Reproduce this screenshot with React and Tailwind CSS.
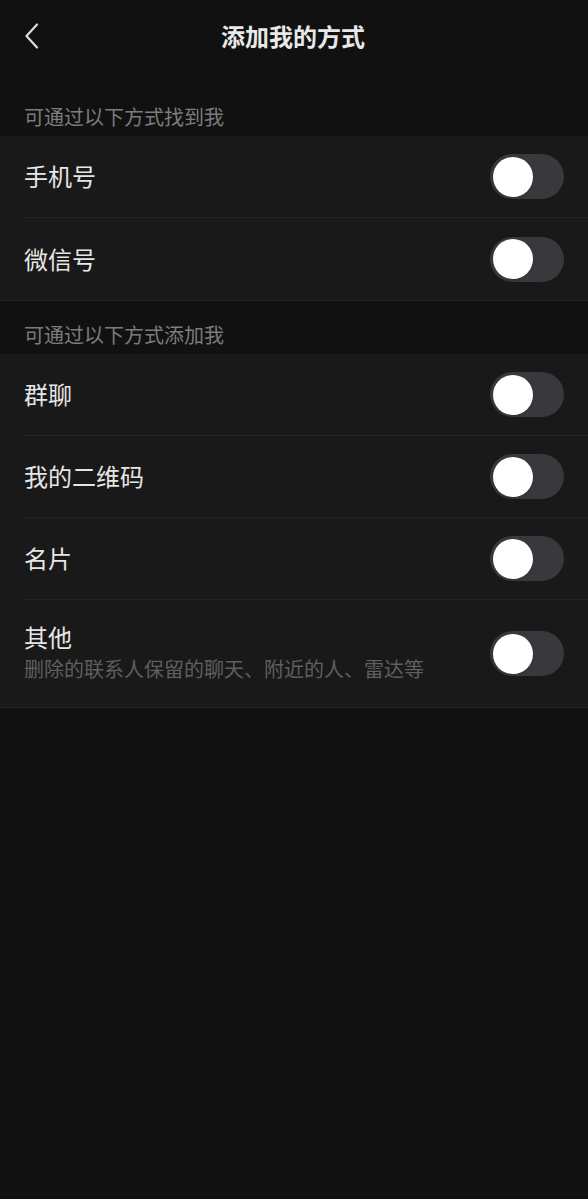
import { useState } from "react";

const font = { fontFamily: '"Noto Sans CJK SC", "Noto Sans", sans-serif' };

function Toggle({ on, onChange }) {
  return (
    <button
      onClick={() => onChange(!on)}
      className={`relative w-[74px] h-[45px] rounded-full shrink-0 ${on ? "bg-[#07c160]" : "bg-[#39393d]"}`}
    >
      <span
        className={`absolute top-[2.5px] w-[40px] h-[40px] rounded-full bg-white shadow ${on ? "left-[32px]" : "left-[2.5px]"}`}
      />
    </button>
  );
}

function Row({ label, desc, on, onChange, last }) {
  return (
    <div className="pl-6 bg-[#191919]">
      <div
        className={`flex items-center justify-between pr-6 ${desc ? "h-[107px]" : "h-[82px]"} ${last ? "" : "border-b border-[#242424]"}`}
      >
        <div className={`flex flex-col ${desc ? "-mt-[2px]" : "-mt-[1px]"}`}>
          <span className="text-[24px] leading-[30px] text-[#e6e6e6]">{label}</span>
          {desc && <span className="text-[20px] leading-[28px] text-[#5f5f5f] mt-[3px]">{desc}</span>}
        </div>
        <Toggle on={on} onChange={onChange} />
      </div>
    </div>
  );
}

const sections = [
  {
    title: "可通过以下方式找到我",
    items: [{ label: "手机号" }, { label: "微信号" }],
  },
  {
    title: "可通过以下方式添加我",
    items: [
      { label: "群聊" },
      { label: "我的二维码" },
      { label: "名片" },
      { label: "其他", desc: "删除的联系人保留的聊天、附近的人、雷达等" },
    ],
  },
];

export default function App() {
  const [state, setState] = useState({});

  return (
    <div className="min-h-[1199px] bg-[#111111]" style={font}>
      <div className="relative h-[75px] flex items-center justify-center">
        <button className="absolute left-[22px] top-[21px] p-[2px]">
          <svg width="16" height="26" viewBox="0 0 16 26" fill="none">
            <path d="M13 1.5 L2.5 13 L13 24.5" stroke="#dcdcdc" strokeWidth="2.2" strokeLinecap="round" strokeLinejoin="round" />
          </svg>
        </button>
        <h1 className="text-[24px] font-bold text-[#e8e8e8] -mt-[4px] -ml-[2px]">添加我的方式</h1>
      </div>

      {sections.map((sec, si) => (
        <div key={si}>
          <div className={`px-6 flex items-end pb-[4px] text-[20px] text-[#7c7c7c] ${si === 0 ? "h-[61px]" : "h-[53px]"}`}>
            {sec.title}
          </div>
          <div className="border-b border-[#222222]">
            {sec.items.map((it, i) => (
              <Row
                key={it.label}
                label={it.label}
                desc={it.desc}
                last={i === sec.items.length - 1}
                on={!!state[it.label]}
                onChange={(v) => setState({ ...state, [it.label]: v })}
              />
            ))}
          </div>
        </div>
      ))}
    </div>
  );
}
